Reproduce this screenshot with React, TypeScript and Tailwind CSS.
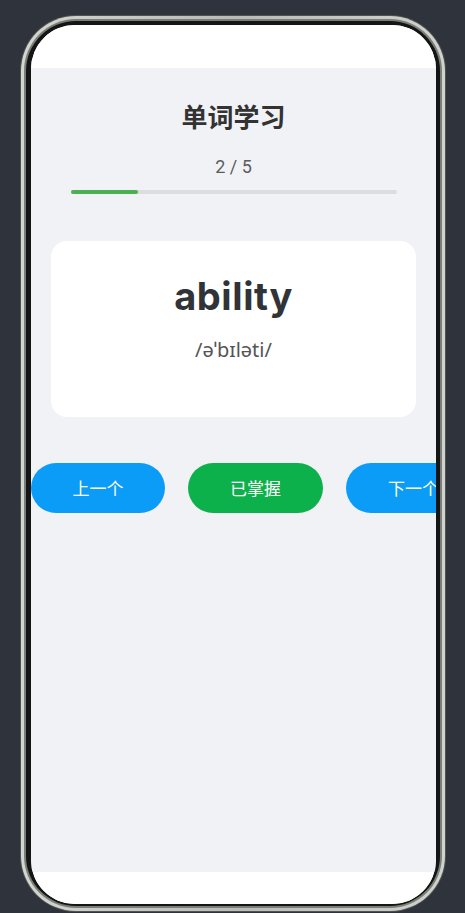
import React from "react";

const cjk = { fontFamily: '"Noto Sans CJK SC", "Noto Sans", sans-serif' };

export default function App() {
  return (
    <div className="w-[465px] h-[913px] bg-[#2f333b] overflow-hidden pt-[15px] pl-[20px]">
      <div className="w-[426px] h-[897px] rounded-[56px] bg-[#4f5352] p-[1px]">
        <div className="w-full h-full rounded-[55px] bg-gradient-to-r from-[#d4d6d0] via-[#b9bbb5] to-[#d0d2cc] p-[3px]">
          <div className="w-full h-full rounded-[52px] bg-[#7a7d79] p-[2px]">
            <div className="w-full h-full rounded-[50px] bg-[#141515] p-[4px] pl-[5px] pb-[2px]">
              <div className="w-full h-full rounded-[44px] bg-white overflow-hidden flex flex-col">
                <div className="h-[43px] shrink-0 bg-white" />
                <div className="flex-1 bg-[#f1f2f6] flex flex-col" style={cjk}>
                  <div className="pt-[31px] text-center text-[26px] leading-[34px] font-bold text-[#333333]">
                    单词学习
                  </div>
                  <div
                    className="mt-[23px] text-center text-[18px] leading-[22px] text-[#5c5c5c]"
                    style={{ fontFamily: 'Roboto, "Noto Sans", sans-serif' }}
                  >
                    2 / 5
                  </div>
                  <div className="mt-[12px] ml-[40px] mr-[39px] h-[4px] rounded-full bg-[#dcdde1]">
                    <div className="h-full w-[20.6%] rounded-full bg-[#4caf50]" />
                  </div>
                  <div className="mt-[47px] mx-[20px] h-[176px] rounded-[16px] bg-white flex flex-col items-center pt-[33px]">
                    <div
                      className="text-[38px] leading-[44px] font-bold text-[#303338] tracking-[0.6px]"
                      style={{ fontFamily: 'Inter, "Noto Sans", sans-serif' }}
                    >
                      ability
                    </div>
                    <div
                      className="mt-[18px] text-[20px] leading-[28px] text-[#555555]"
                      style={{ fontFamily: '"Noto Sans", "DejaVu Sans", sans-serif' }}
                    >
                      /əˈbɪləti/
                    </div>
                  </div>
                  <div className="mt-[46px] flex gap-[23px] overflow-hidden">
                    <div className="w-[134px] h-[50px] shrink-0 rounded-full bg-[#0b9cf7] flex items-center justify-center text-white text-[17px]">
                      上一个
                    </div>
                    <div className="w-[135px] h-[50px] shrink-0 rounded-full bg-[#0cb14b] flex items-center justify-center text-white text-[17px]">
                      已掌握
                    </div>
                    <div className="w-[135px] h-[50px] shrink-0 rounded-full bg-[#0b9cf7] flex items-center justify-center text-white text-[17px]">
                      下一个
                    </div>
                  </div>
                </div>
                <div className="h-[32px] shrink-0 bg-white" />
              </div>
            </div>
          </div>
        </div>
      </div>
    </div>
  );
}
